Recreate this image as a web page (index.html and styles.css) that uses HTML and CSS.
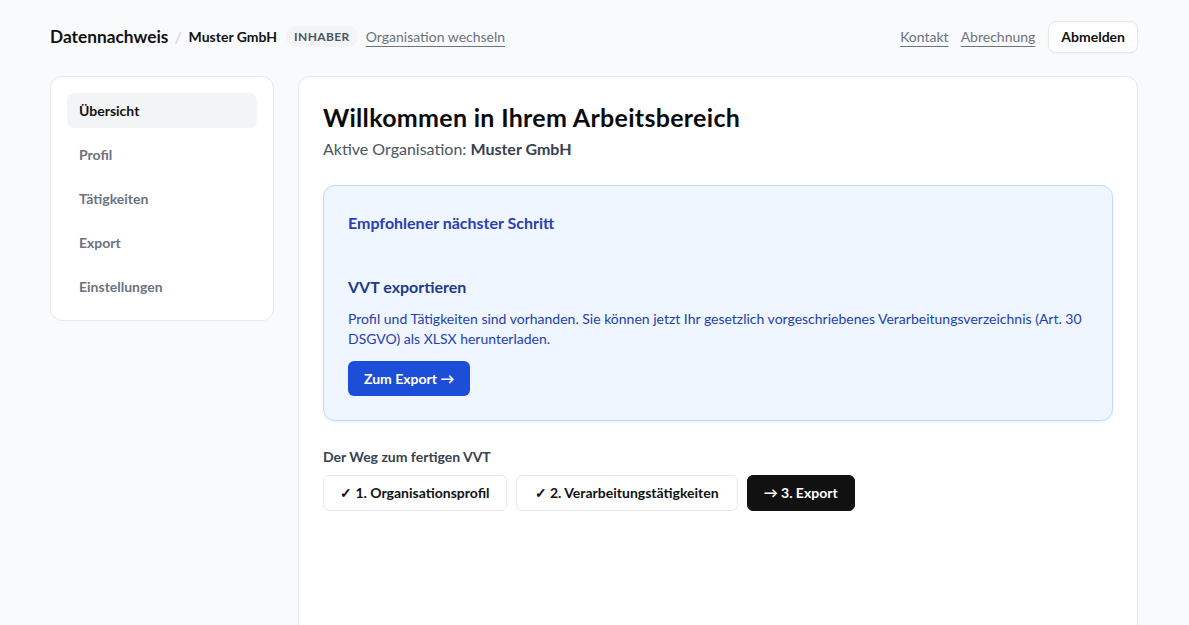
FILE: index.html
```html
<!DOCTYPE html>
<html lang="de">
<head>
<meta charset="utf-8">
<title>Datennachweis</title>
<link rel="stylesheet" href="styles.css">
</head>
<body>
<header class="topbar">
  <div class="crumbs">
    <span class="brand">Datennachweis</span>
    <span class="sep">/</span>
    <span class="org">Muster GmbH</span>
    <span class="role">INHABER</span>
    <a class="link" href="#">Organisation wechseln</a>
  </div>
  <nav class="toplinks">
    <a class="link" href="#">Kontakt</a>
    <a class="link" href="#">Abrechnung</a>
    <button class="logout">Abmelden</button>
  </nav>
</header>
<div class="layout">
  <aside class="sidebar">
    <a class="nav-item active" href="#">Übersicht</a>
    <a class="nav-item" href="#">Profil</a>
    <a class="nav-item" href="#">Tätigkeiten</a>
    <a class="nav-item" href="#">Export</a>
    <a class="nav-item" href="#">Einstellungen</a>
  </aside>
  <main class="main">
    <h1 class="title">Willkommen in Ihrem Arbeitsbereich</h1>
    <p class="subtitle">Aktive Organisation: <strong>Muster GmbH</strong></p>
    <section class="next">
      <h2 class="next-head">Empfohlener nächster Schritt</h2>
      <h3 class="next-title">VVT exportieren</h3>
      <p class="next-text">Profil und Tätigkeiten sind vorhanden. Sie können jetzt Ihr gesetzlich vorgeschriebenes Verarbeitungsverzeichnis (Art. 30 DSGVO) als XLSX herunterladen.</p>
      <a class="primary" href="#">Zum Export →</a>
    </section>
    <h4 class="steps-head">Der Weg zum fertigen VVT</h4>
    <div class="steps">
      <span class="step">✓ 1. Organisationsprofil</span>
      <span class="step wide">✓ 2. Verarbeitungstätigkeiten</span>
      <span class="step current">→ 3. Export</span>
    </div>
  </main>
</div>
</body>
</html>
```
FILE: styles.css
```css
* { box-sizing: border-box; }
html, body { margin: 0; }
body {
  background: #f9fafb;
  font-family: "Lato", "Noto Sans", sans-serif;
  color: #111827;
  padding: 0 51px 0 50px;
  height: 625px;
  overflow: hidden;
}
.topbar {
  display: flex;
  justify-content: space-between;
  align-items: center;
  height: 72px;
  padding-top: 1px;
}
.crumbs, .toplinks { display: flex; align-items: center; }
.brand { font-size: 17.3px; font-weight: 700; color: #111; }
.sep { color: #d1d5db; margin: 0 7px 0 6px; font-size: 16px; }
.org { font-size: 14px; font-weight: 700; color: #111; }
.role {
  margin-left: 9px;
  font-size: 12px; font-weight: 700; letter-spacing: 0.4px;
  color: #4b5563;
  background: #f3f4f6;
  border-radius: 10px;
  padding: 3px 8px;
}
.link {
  margin-left: 8px;
  font-size: 14px;
  color: #6b7280;
  text-decoration: underline;
  text-decoration-color: #6b7280;
  text-underline-offset: 4px;
}
.toplinks .link { margin-left: 12px; }
.toplinks .link:first-child { margin-left: 0; }
.logout {
  margin-left: 13px;
  font-family: inherit;
  font-size: 14px; font-weight: 700; color: #111;
  background: #fff;
  border: 1px solid #e5e7eb;
  border-radius: 8px;
  height: 32px;
  padding: 0 12px;
  box-shadow: 0 1px 2px rgba(0,0,0,0.04);
}
.layout {
  display: grid;
  grid-template-columns: 224px 1fr;
  gap: 24px;
  align-items: start;
  margin-top: 4px;
}
.sidebar {
  background: #fff;
  border: 1px solid #e5e7eb;
  border-radius: 12px;
  padding: 16px;
  display: flex; flex-direction: column; gap: 9px;
}
.nav-item {
  display: block;
  height: 35px; line-height: 35px;
  padding: 0 12px;
  border-radius: 8px;
  font-size: 14px; font-weight: 700;
  color: #6b7280;
  text-decoration: none;
}
.nav-item.active { background: #f3f4f6; color: #111; }
.main {
  background: #fff;
  border: 1px solid #e5e7eb;
  border-radius: 12px;
  padding: 24px 24px 120px;
  min-height: 560px;
}
.title { margin: 0; font-size: 25px; letter-spacing: 0.3px; font-weight: 700; color: #0a0a0a; line-height: 32px; }
.subtitle { margin: 4px 0 0; font-size: 16px; color: #4b5563; line-height: 24px; }
.subtitle strong { font-weight: 700; color: #374151; }
.next {
  margin-top: 24px;
  background: #eff6ff;
  border: 1px solid #bfdbfe;
  border-radius: 12px;
  padding: 24px 24px 24px;
  box-shadow: 0 1px 3px rgba(59,130,246,0.12);
}
.next-head { margin: 1px 0 0; font-size: 16px; font-weight: 700; color: #2a3eb1; line-height: 24px; }
.next-title { margin: 40px 0 0; font-size: 16px; font-weight: 700; color: #1e3a8a; line-height: 24px; }
.next-text { margin: 10px 0 0; font-size: 14px; line-height: 20px; color: #1e40af; }
.primary {
  display: inline-block;
  margin-top: 12px;
  background: #1d4ed8;
  color: #fff;
  font-size: 14px; font-weight: 700;
  text-decoration: none;
  height: 35px; line-height: 35px;
  padding: 0 16px;
  border-radius: 6px;
}
.steps-head { margin: 26px 0 0; font-size: 14px; font-weight: 700; color: #374151; line-height: 20px; }
.steps { display: flex; gap: 9px; margin-top: 8px; }
.step {
  height: 36px; line-height: 34px;
  padding: 0 16px;
  border: 1px solid #e5e7eb;
  border-radius: 6px;
  font-size: 14px; font-weight: 700; color: #111;
  background: #fff;
}
.step.wide { padding: 0 18px; }
.step.current { background: #111; border-color: #111; color: #fff; }
```
